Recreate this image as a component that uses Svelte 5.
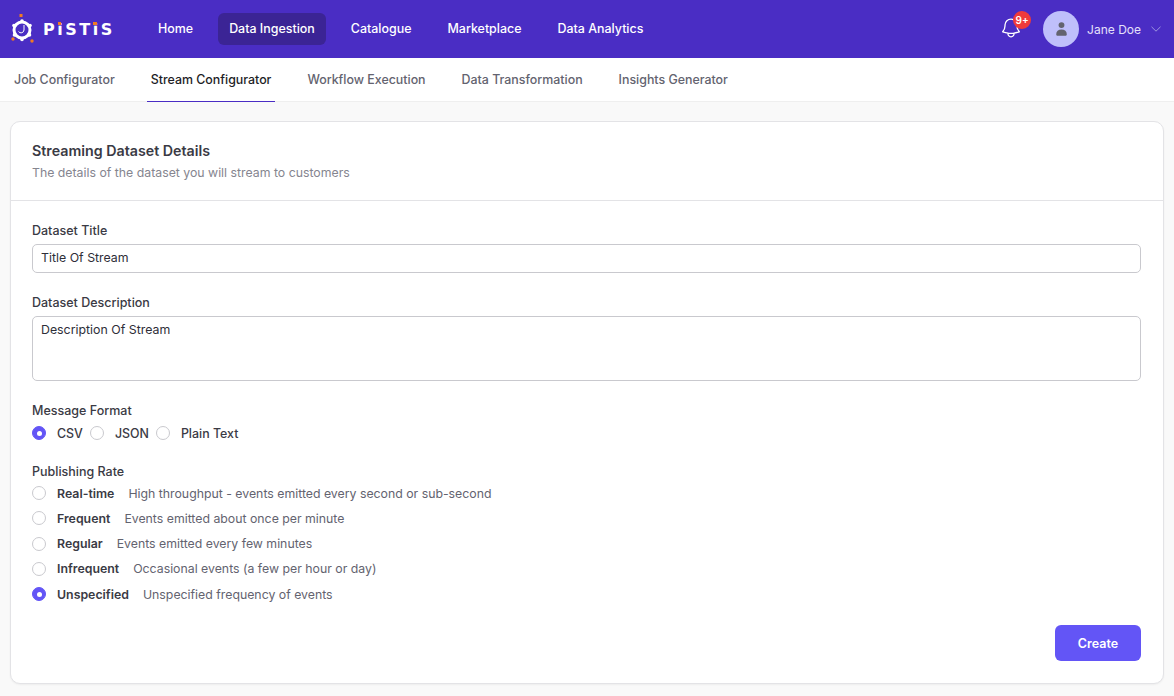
<script lang="ts">
  const navItems = ['Home', 'Data Ingestion', 'Catalogue', 'Marketplace', 'Data Analytics'];
  const tabs = ['Job Configurator', 'Stream Configurator', 'Workflow Execution', 'Data Transformation', 'Insights Generator'];
  const formats = ['CSV', 'JSON', 'Plain Text'];
  const rates = [
    { name: 'Real-time', desc: 'High throughput - events emitted every second or sub-second' },
    { name: 'Frequent', desc: 'Events emitted about once per minute' },
    { name: 'Regular', desc: 'Events emitted every few minutes' },
    { name: 'Infrequent', desc: 'Occasional events (a few per hour or day)' },
    { name: 'Unspecified', desc: 'Unspecified frequency of events' }
  ];

  let format = $state('CSV');
  let rate = $state('Unspecified');
  let title = $state('Title Of Stream');
  let description = $state('Description Of Stream');
</script>

<header class="topbar">
  <div class="logo">
    <svg width="24" height="30" viewBox="0 0 24 30" aria-hidden="true">
      <rect x="8.500" y="0" width="3" height="3" fill="#f07a22" />
      <circle cx="2" cy="25" r="1.700" fill="#f07a22" />
      <circle cx="21" cy="27" r="1.700" fill="#f07a22" />
      <circle cx="11" cy="16" r="8" fill="none" stroke="#fff" stroke-width="3" />
      <circle cx="11" cy="7" r="1.800" fill="#fff" />
      <circle cx="3" cy="11.500" r="1.800" fill="#fff" />
      <circle cx="19" cy="11.500" r="1.800" fill="#fff" />
      <circle cx="3.500" cy="21" r="1.800" fill="#fff" />
      <circle cx="18.500" cy="21" r="1.800" fill="#fff" />
      <circle cx="11" cy="25.500" r="1.800" fill="#fff" />
      <path d="M13 11 v5 a3 3 0 0 1 -5.500 1.500" fill="none" stroke="#fff" stroke-width="1" />
    </svg>
    <span class="wordmark">P<span class="i">i</span>ST<span class="i">i</span>S</span>
  </div>
  <nav class="nav">
    {#each navItems as item}
      <a href="#top" class="nav-item" class:active={item === 'Data Ingestion'}>{item}</a>
    {/each}
  </nav>
  <div class="user-area">
    <div class="bell">
      <svg width="24" height="24" viewBox="0 0 24 24" fill="none" stroke="#fff" stroke-width="1.300" stroke-linecap="round" stroke-linejoin="round" aria-hidden="true">
        <path d="M14.900 17.100c1.900-.2 3.700-.7 5.400-1.300-1.400-1.600-2.300-3.600-2.300-5.800V9.300A6 6 0 0 0 6 9v1c0 2.200-.9 4.200-2.300 5.800 1.700.6 3.500 1.100 5.400 1.300m5.800 0a24 24 0 0 1-5.800 0m5.800 0a3 3 0 1 1-5.800 0" />
      </svg>
      <span class="badge">9+</span>
    </div>
    <div class="avatar">
      <svg width="13" height="16" viewBox="0 0 16 18" fill="#63636f" aria-hidden="true">
        <circle cx="8" cy="4.200" r="3.600" />
        <path d="M1.500 15.500C1.500 11.500 4 9.600 8 9.600s6.500 1.900 6.500 5.900c0 1.200-.8 1.900-2 1.900h-9c-1.200 0-2-.7-2-1.900z" />
      </svg>
    </div>
    <span class="user-name">Jane Doe</span>
    <svg class="chevron" width="10" height="6" viewBox="0 0 10 6" fill="none" stroke="#9d94e0" stroke-width="1" aria-hidden="true">
      <path d="M.5 .8l4.500 4.400 4.500-4.400" />
    </svg>
  </div>
</header>

<div class="tabs">
  {#each tabs as tab}
    <a href="#top" class="tab" class:active={tab === 'Stream Configurator'}>{tab}</a>
  {/each}
</div>

<main class="page">
  <section class="card">
    <div class="card-head">
      <h2>Streaming Dataset Details</h2>
      <p>The details of the dataset you will stream to customers</p>
    </div>
    <form class="card-body" onsubmit={(e) => e.preventDefault()}>
      <label class="field">
        <span class="label">Dataset Title</span>
        <input type="text" bind:value={title} />
      </label>
      <label class="field">
        <span class="label">Dataset Description</span>
        <textarea bind:value={description}></textarea>
      </label>

      <div class="group">
        <span class="label">Message Format</span>
        <div class="radio-row">
          {#each formats as f}
            <label class="radio">
              <input type="radio" name="format" value={f} bind:group={format} />
              <span class="dot"></span>
              <span class="radio-text">{f}</span>
            </label>
          {/each}
        </div>
      </div>

      <div class="group">
        <span class="label">Publishing Rate</span>
        <div class="radio-col">
          {#each rates as r}
            <label class="radio">
              <input type="radio" name="rate" value={r.name} bind:group={rate} />
              <span class="dot"></span>
              <span class="rate-name">{r.name}</span>
              <span class="rate-desc">{r.desc}</span>
            </label>
          {/each}
        </div>
      </div>

      <div class="actions">
        <button type="submit">Create</button>
      </div>
    </form>
  </section>
</main>

<style>
  :global(body) {
    margin: 0;
    background: #f9f9f9;
    font-family: Inter, "Liberation Sans", sans-serif;
    color: #2e2e38;
  }

  .topbar {
    height: 58px;
    background: #4a2dc4;
    display: flex;
    align-items: center;
    padding-left: 11px;
    padding-right: 13px;
  }

  .logo {
    display: flex;
    align-items: center;
    gap: 8px;
    width: 136px;
    flex: none;
  }

  .wordmark {
    font-family: "DejaVu Sans", sans-serif;
    font-weight: 700;
    font-size: 16px;
    letter-spacing: 2.500px;
    color: #fff;
  }

  .i {
    position: relative;
  }

  .i::before {
    content: '';
    position: absolute;
    left: 0.500px;
    top: 2px;
    width: 3.500px;
    height: 3.500px;
    background: #f07a22;
  }

  .nav {
    display: flex;
    gap: 14px;
    flex: 1;
  }

  .nav-item {
    height: 32px;
    box-sizing: border-box;
    padding: 0 11px 2px;
    display: flex;
    align-items: center;
    border-radius: 6px;
    color: #fff;
    font-size: 12.450px;
    font-weight: 500;
    text-decoration: none;
  }

  .nav-item.active {
    background: #3b2495;
  }

  .user-area {
    display: flex;
    align-items: center;
  }

  .bell {
    position: relative;
    width: 24px;
    height: 24px;
    margin-right: 20px;
    margin-top: -2px;
  }

  .badge {
    position: absolute;
    top: -5px;
    left: 14px;
    width: 18px;
    height: 18px;
    border-radius: 50%;
    background: #ef3a3a;
    color: #fff;
    font-size: 10px;
    font-weight: 600;
    display: flex;
    align-items: center;
    justify-content: center;
  }

  .avatar {
    width: 36px;
    height: 36px;
    border-radius: 50%;
    background: #bfbffb;
    display: flex;
    align-items: center;
    justify-content: center;
  }

  .user-name {
    margin-left: 8px;
    font-size: 12px;
    color: #e4e0fa;
  }

  .chevron {
    margin-left: 10px;
  }

  .tabs {
    height: 44px;
    background: #fff;
    display: flex;
    padding-left: 10px;
    gap: 28px;
    box-sizing: border-box;
    border-bottom: 1px solid #efefef;
  }

  .tab {
    padding: 0 4px;
    height: 44px;
    box-sizing: border-box;
    display: flex;
    align-items: center;
    color: #63636f;
    font-size: 12.400px;
    font-weight: 500;
    text-decoration: none;
    border-bottom: 1px solid transparent;
  }

  .tab.active {
    color: #1e1e26;
    border-bottom-color: #4a2dc4;
  }

  .page {
    padding: 19px 10px 12px;
  }

  .card {
    background: #fff;
    border: 1px solid #e3e3e6;
    border-radius: 10px;
    box-shadow: 0 1px 2px rgba(0, 0, 0, 0.05);
  }

  .card-head {
    height: 79px;
    box-sizing: border-box;
    padding: 20px 21px 0;
    border-bottom: 1px solid #e3e3e6;
  }

  .card-head h2 {
    margin: 0;
    font-size: 14.250px;
    line-height: 17px;
    font-weight: 600;
    color: #3a3a44;
  }

  .card-head p {
    margin: 6px 0 0;
    font-size: 12.300px;
    line-height: 15px;
    color: #85858f;
  }

  .card-body {
    padding: 22px 22px 22px 21px;
    display: flex;
    flex-direction: column;
  }

  .field {
    display: flex;
    flex-direction: column;
    margin-bottom: 22px;
  }

  .label {
    font-size: 12.500px;
    line-height: 15px;
    font-weight: 500;
    color: #3a3a44;
    display: block;
  }

  input[type='text'],
  textarea {
    margin-top: 6px;
    border: 1px solid #c9c9ce;
    border-radius: 5px;
    font-family: inherit;
    font-size: 12.350px;
    color: #2e2e38;
    padding: 0 8px;
    outline: none;
    box-sizing: border-box;
  }

  input[type='text'] {
    height: 29px;
    padding-bottom: 2px;
  }

  textarea {
    height: 65px;
    padding-top: 5px;
    line-height: 15px;
    resize: none;
    display: block;
  }

  .group {
    margin-bottom: 21px;
  }

  .radio-row {
    display: flex;
    gap: 7px;
    margin-top: 5px;
  }

  .radio-col {
    display: flex;
    flex-direction: column;
    gap: 5.250px;
    margin-top: 4px;
  }

  .radio {
    display: flex;
    align-items: center;
    height: 20px;
    font-size: 12.400px;
    font-weight: 500;
    color: #3a3a44;
  }

  .radio input {
    position: absolute;
    opacity: 0;
    width: 0;
    height: 0;
  }

  .dot {
    width: 14px;
    height: 14px;
    box-sizing: border-box;
    border: 1px solid #c9c9ce;
    border-radius: 50%;
    background: #fff;
    margin-right: 11px;
    flex: none;
  }

  .radio input:checked + .dot {
    background: #6355f6;
    border-color: #6355f6;
    position: relative;
  }

  .radio input:checked + .dot::after {
    content: '';
    position: absolute;
    left: 3.500px;
    top: 3.500px;
    width: 5px;
    height: 5px;
    border-radius: 50%;
    background: #fff;
  }

  .rate-name {
    font-size: 12.350px;
    font-weight: 600;
    margin-right: 14px;
  }

  .rate-desc {
    font-size: 12.300px;
    color: #63636f;
    font-weight: 400;
  }

  .actions {
    display: flex;
    justify-content: flex-end;
  }

  button {
    width: 86px;
    height: 36px;
    border: none;
    border-radius: 6px;
    background: #6355f6;
    color: #fff;
    font-family: inherit;
    font-size: 12.500px;
    font-weight: 600;
  }
</style>
